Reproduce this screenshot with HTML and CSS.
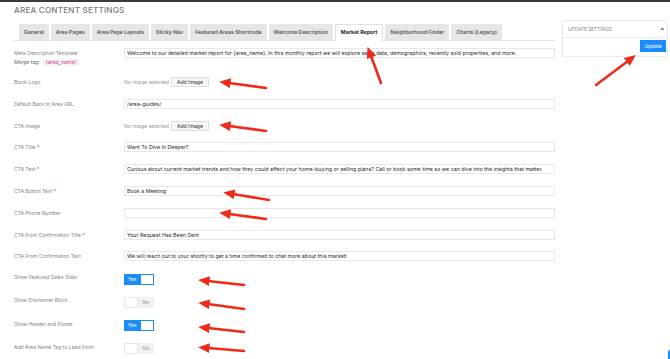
FILE: index.html
```html
<!DOCTYPE html>
<html lang="en">
<head>
  <meta charset="UTF-8" />
  <title>Area Content Settings</title>
  <link rel="stylesheet" href="styles.css">
</head>
<body>
  <div class="topbar"></div>
  <div class="page">
    <div class="main">
      <h1 class="title">Area Content Settings</h1>
      <div class="tabs">
        <div class="tab">General</div>
        <div class="tab">Area Pages</div>
        <div class="tab">Area Page Layouts</div>
        <div class="tab">Sticky Nav</div>
        <div class="tab">Featured Areas Shortcode</div>
        <div class="tab">Welcome Description</div>
        <div class="tab active">Market Report</div>
        <div class="tab">Neighborhood Finder</div>
        <div class="tab">Charts (Legacy)</div>
      </div>

      <div class="form">
        <div class="row row-first">
          <div class="label">
            <div>Meta Description Template</div>
            <div class="merge"><em>Merge tag:</em> <span class="tag">{area_name}</span></div>
          </div>
          <div class="field"><div class="input">Welcome to our detailed market report for {area_name}. In this monthly report we will explore sales data, demographics, recently sold properties, and more.</div></div>
        </div>
        <div class="row">
          <div class="label">Block Logo</div>
          <div class="field media"><span class="none">No image selected</span><span class="btn-add">Add Image</span></div>
        </div>
        <div class="row">
          <div class="label">Default Back to Area URL</div>
          <div class="field"><div class="input">/area-guides/</div></div>
        </div>
        <div class="row">
          <div class="label">CTA Image</div>
          <div class="field media"><span class="none">No image selected</span><span class="btn-add">Add Image</span></div>
        </div>
        <div class="row">
          <div class="label">CTA Title <span class="req">*</span></div>
          <div class="field"><div class="input">Want To Dive In Deeper?</div></div>
        </div>
        <div class="row">
          <div class="label">CTA Text <span class="req">*</span></div>
          <div class="field"><div class="input">Curious about current market trends and how they could affect your home-buying or selling plans? Call or book some time so we can dive into the insights that matter.</div></div>
        </div>
        <div class="row">
          <div class="label">CTA Button Text <span class="req">*</span></div>
          <div class="field"><div class="input">Book a Meeting</div></div>
        </div>
        <div class="row">
          <div class="label">CTA Phone Number</div>
          <div class="field"><div class="input"></div></div>
        </div>
        <div class="row">
          <div class="label">CTA From Confirmation Title <span class="req">*</span></div>
          <div class="field"><div class="input">Your Request Has Been Sent</div></div>
        </div>
        <div class="row">
          <div class="label">CTA From Confirmation Text</div>
          <div class="field"><div class="input">We will reach out to your shortly to get a time confirmed to chat more about this market!</div></div>
        </div>
        <div class="row row-toggle">
          <div class="label">Show Featured Sales Stats</div>
          <div class="field"><div class="toggle on"><span class="yes">Yes</span><span class="knob"></span></div></div>
        </div>
        <div class="row row-toggle">
          <div class="label">Show Disclaimer Block</div>
          <div class="field"><div class="toggle"><span class="knob"></span><span class="no">No</span></div></div>
        </div>
        <div class="row row-toggle">
          <div class="label">Show Header and Footer</div>
          <div class="field"><div class="toggle on"><span class="yes">Yes</span><span class="knob"></span></div></div>
        </div>
        <div class="row row-toggle">
          <div class="label">Add Area Name Tag to Lead Form</div>
          <div class="field"><div class="toggle"><span class="knob"></span><span class="no">No</span></div></div>
        </div>
      </div>
    </div>

    <div class="side">
      <div class="box">
        <div class="box-head">
          <span>Update Settings</span>
          <span class="caret">&#9650;</span>
        </div>
        <div class="box-body">
          <button class="btn-update">Update</button>
        </div>
      </div>
    </div>
  </div>

  <div class="corner"></div>

  <svg class="arrows" width="670" height="359" viewBox="0 0 670 359">
    <defs>
      <marker id="head" markerWidth="4.4" markerHeight="3.8" refX="0.6" refY="1.9" orient="auto" markerUnits="strokeWidth">
        <path d="M0,0 L4.4,1.9 L0,3.8 Z" fill="#ee2a1b" />
      </marker>
    </defs>
    <g stroke="#ee2a1b" stroke-width="2.6" stroke-linecap="round" fill="none" marker-end="url(#head)">
      <line x1="381" y1="83" x2="371" y2="56" />
      <line x1="596" y1="85" x2="628" y2="61" />
      <line x1="266" y1="88" x2="229" y2="83" />
      <line x1="266" y1="131" x2="229" y2="126" />
      <line x1="269" y1="200" x2="233" y2="194" />
      <line x1="266" y1="219" x2="229" y2="214" />
      <line x1="244" y1="285" x2="208" y2="281" />
      <line x1="244" y1="309" x2="208" y2="304" />
      <line x1="244" y1="332" x2="208" y2="328" />
      <line x1="244" y1="351" x2="208" y2="348" />
    </g>
  </svg>
</body>
</html>
```

FILE: styles.css
```css
body {
  margin: 0;
  background: #fff;
  font-family: Inter, 'Noto Sans', sans-serif;
  color: #333;
  width: 670px;
  height: 359px;
  overflow: hidden;
  position: relative;
}
.topbar {
  height: 2px;
  background: #3a3a3a;
}
.page {
  display: flex;
  padding: 0 2px 0 14px;
  gap: 7px;
}
.main {
  width: 541px;
}
.title {
  margin: 0;
  padding-top: 2px;
  font-size: 8.2px;
  line-height: 12px;
  font-weight: 500;
  letter-spacing: 0.15px;
  text-transform: uppercase;
  color: #7a7a7a;
}
.tabs {
  display: flex;
  gap: 2px;
  padding-left: 5px;
  margin-top: 8px;
  border-bottom: 1px solid #e2e2e2;
}
.tab {
  height: 16px;
  line-height: 16px;
  padding: 0 5px;
  background: #e6e6e6;
  font-size: 5.25px;
  font-weight: 600;
  color: #555;
  white-space: nowrap;
}
.tab.active {
  background: #fff;
  color: #1f1f1f;
  font-weight: 700;
  border: 1px solid #e2e2e2;
  border-bottom: none;
  height: 16px;
  line-height: 15px;
  margin-bottom: -1px;
}
.form {
  padding-top: 6px;
}
.row {
  display: flex;
  align-items: center;
  height: 21.8px;
}
.row-first {
  align-items: flex-start;
  height: 24.2px;
  padding-top: 1px;
  box-sizing: border-box;
}
.row-toggle {
  height: 23.3px;
}
.label {
  width: 110px;
  flex-shrink: 0;
  font-size: 5px;
  color: #858585;
  line-height: 8px;
}
.row-toggle .label {
  margin-top: -4px;
}
.row-first .label {
  padding-top: 1px;
}
.req {
  color: #e53935;
}
.merge {
  margin-top: 1px;
  display: flex;
  align-items: center;
  gap: 3px;
  color: #666;
}
.tag {
  background: #f3f3f3;
  color: #d6338c;
  font-style: italic;
  padding: 0 3px;
  line-height: 7px;
}
.field {
  flex: 1;
}
.input {
  height: 10px;
  line-height: 9px;
  box-sizing: border-box;
  border: 1px solid #e8e8e8;
  padding: 0 2px;
  font-size: 5.3px;
  color: #2b2b2b;
  white-space: nowrap;
  overflow: hidden;
}
.media {
  display: flex;
  align-items: center;
  gap: 2px;
  font-size: 5.1px;
}
.none {
  color: #9a9a9a;
}
.btn-add {
  display: inline-block;
  height: 10px;
  line-height: 9px;
  box-sizing: border-box;
  padding: 0 5px;
  background: #f6f6f6;
  border: 1px solid #dedede;
  color: #333;
}
.toggle {
  display: flex;
  width: 30px;
  height: 11px;
  box-sizing: border-box;
  background: #f1f1f1;
  font-size: 5px;
  color: #999;
}
.toggle .knob {
  width: 14px;
  height: 11px;
  box-sizing: border-box;
  background: #fff;
  border: 1px solid #e5e5e5;
}
.toggle .no,
.toggle .yes {
  flex: 1;
  text-align: center;
  line-height: 11px;
}
.toggle.on {
  background: #1a8cf5;
  color: #fff;
}
.toggle.on .knob {
  border: 1px solid #1a8cf5;
}
.side {
  width: 106px;
  padding-top: 18px;
}
.box {
  border: 1px solid #ececec;
}
.box-head {
  display: flex;
  justify-content: space-between;
  align-items: center;
  height: 16px;
  padding: 0 3px 0 5px;
  border-bottom: 1px solid #ececec;
  font-size: 4.8px;
  color: #8a8a8a;
  text-transform: uppercase;
}
.caret {
  font-size: 3.5px;
  color: #666;
}
.box-body {
  display: flex;
  justify-content: flex-end;
  padding: 2px 1px 4px;
}
.btn-update {
  height: 12px;
  width: 26px;
  padding: 0;
  border: none;
  background: #1a8cff;
  color: #fff;
  font-family: Inter, sans-serif;
  font-size: 5px;
}
.corner {
  position: absolute;
  right: 0;
  bottom: 0;
  width: 2px;
  height: 9px;
  background: #1a8cff;
  border-radius: 2px 0 0 0;
}
.arrows {
  position: absolute;
  left: 0;
  top: 0;
  pointer-events: none;
}
```
